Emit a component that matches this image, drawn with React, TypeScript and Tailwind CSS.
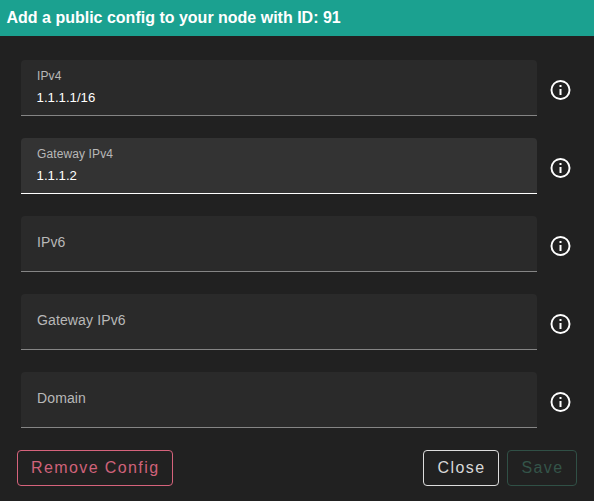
type FieldProps = { label: string; value?: string; active?: boolean };

function InfoIcon() {
  return (
    <svg viewBox="-0.5 0 24 24" className="size-6 shrink-0 fill-white" aria-hidden="true">
      <path d="M11 9h2V7h-2m1 13c-4.41 0-8-3.59-8-8s3.59-8 8-8 8 3.59 8 8-3.59 8-8 8m0-18A10 10 0 0 0 2 12a10 10 0 0 0 10 10 10 10 0 0 0 10-10A10 10 0 0 0 12 2m-1 15h2v-6h-2v6Z" />
    </svg>
  );
}

function Field({ label, value, active }: FieldProps) {
  return (
    <div className="flex items-center gap-[11px]">
      <div
        className={`flex h-14 w-[516px] flex-col rounded-t border-b px-4 ${
          active ? "border-white bg-[#333333]" : "border-[#858585] bg-[#2a2a2a]"
        }`}
      >
        {value ? (
          <>
            <span className="mt-2 text-[12px] leading-4 tracking-[0.11px] text-[#b8b8b8]">{label}</span>
            <span className="-ml-[0.4px] mt-[6px] text-[13.2px] leading-4 text-white">{value}</span>
          </>
        ) : (
          <span className="mt-4 text-[14px] leading-5 tracking-[0.13px] text-[#b8b8b8]">{label}</span>
        )}
      </div>
      <div className="mt-1">
        <InfoIcon />
      </div>
    </div>
  );
}

const button = "flex h-9 items-center justify-center rounded border text-[16px] tracking-[1.4px]";

export default function App() {
  return (
    <div className="flex h-[501px] w-[594px] flex-col overflow-hidden bg-[#212121] font-['Liberation_Sans',Arial,sans-serif]">
      <header className="flex h-9 items-center bg-[#1ba190] pl-[6.5px] text-[16px] font-bold text-white">
        Add a public config to your node with ID: 91
      </header>
      <main className="mt-6 flex flex-col gap-[22px] pl-[21px]">
        <Field label="IPv4" value="1.1.1.1/16" />
        <Field label="Gateway IPv4" value="1.1.1.2" active />
        <Field label="IPv6" />
        <Field label="Gateway IPv6" />
        <Field label="Domain" />
      </main>
      <footer className="mt-[22px] flex gap-2 pr-[17px] pl-[17px]">
        <button className={`${button} mr-auto w-[156px] border-[#d6637c] pl-[0.4px] text-[#d0627a]`}>Remove Config</button>
        <button className={`${button} w-[76px] border-[#dddddd] pl-[1px] text-[#d8d8d8]`}>Close</button>
        <button className={`${button} w-[70px] border-[#305046] pl-[1px] text-[#345449]`}>Save</button>
      </footer>
    </div>
  );
}
